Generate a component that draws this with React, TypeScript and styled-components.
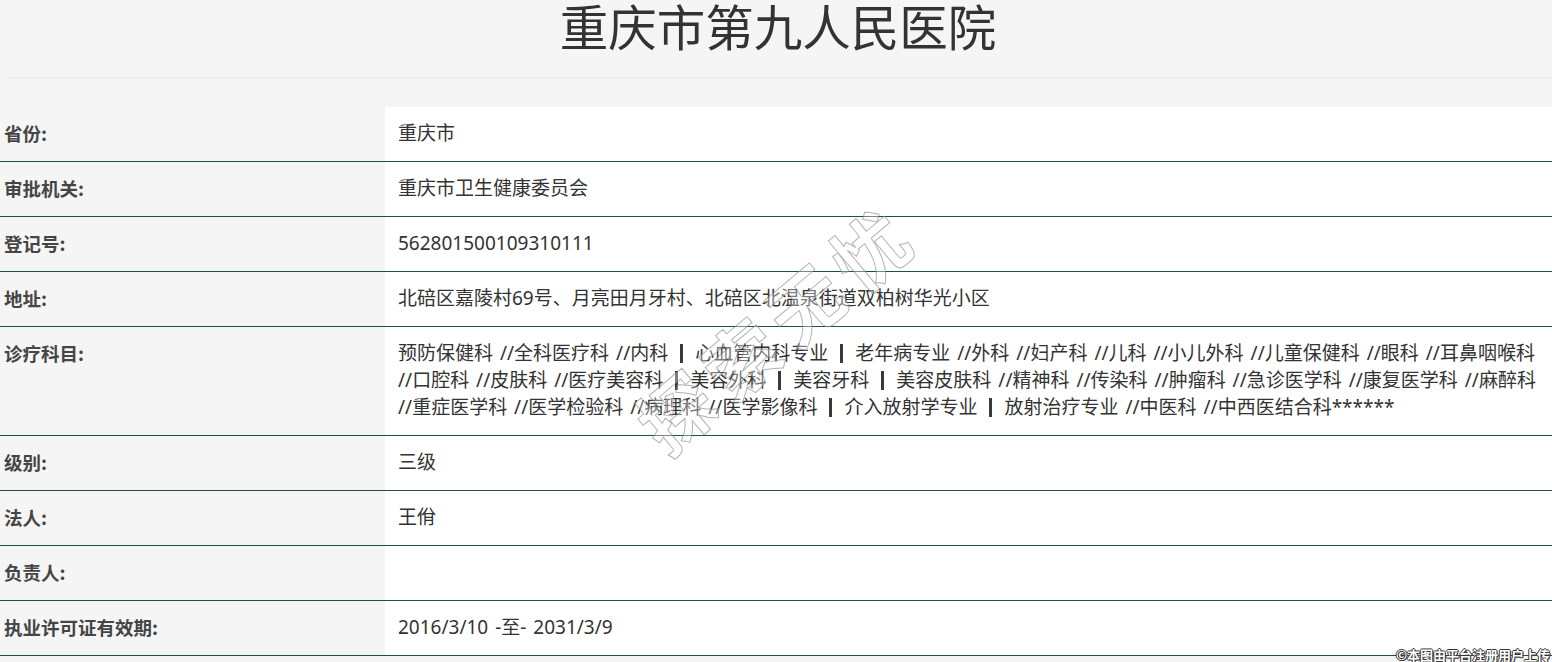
import React from "react";
import styled, { createGlobalStyle } from "styled-components";

const Global = createGlobalStyle`
  html, body {
    margin: 0;
    padding: 0;
    background: #f5f5f5;
  }
  body {
    font-family: "Noto Sans", "Noto Sans CJK SC", sans-serif;
    overflow: hidden;
  }
`;

const Page = styled.div`
  position: relative;
  width: 1552px;
  height: 662px;
  overflow: hidden;
  background: #f5f5f5;
`;

const Header = styled.header`
  margin-left: 8px;
  height: 77px;
  border-bottom: 1px solid #e9e9e9;
  box-shadow: 0 1px 0 #f0f0f0;
  display: flex;
  justify-content: center;
  align-items: flex-start;
`;

const Title = styled.h1`
  margin: 0;
  margin-left: -4px;
  font-family: "Noto Sans CJK SC", sans-serif;
  font-size: 48.5px;
  font-weight: 400;
  line-height: 50px;
  color: #333;
`;

const Table = styled.div`
  margin-top: 29px;
  display: flex;
  flex-direction: column;
`;

const Row = styled.div`
  display: grid;
  grid-template-columns: 385px 1fr;
  border-bottom: 1px solid #234f3b;
`;

const Label = styled.div`
  background: #f5f5f5;
  padding: 13px 0 14px 4px;
  font-family: "Noto Sans CJK SC", sans-serif;
  font-size: 18.5px;
  font-weight: 700;
  line-height: 27px;
  color: #454545;
`;

const Value = styled.div`
  background: #fff;
  padding: 13px 6px 14px 13px;
  font-family: "Noto Sans", "Noto Sans CJK SC", sans-serif;
  font-size: 19px;
  line-height: 27px;
  color: #333;
  min-height: 27px;
  word-spacing: 2px;
`;

const Item = styled.span`
  white-space: nowrap;
`;

const Bar = styled.span`
  display: inline-block;
  width: 3px;
  height: 19px;
  margin: 0 12px;
  vertical-align: -3px;
  background: #3a3a3a;
`;

const Watermark = styled.div`
  position: absolute;
  left: 605px;
  top: 281px;
  width: 340px;
  text-align: center;
  transform: rotate(-40deg);
  font-family: "Noto Sans CJK SC", sans-serif;
  font-size: 74px;
  font-weight: 700;
  line-height: 90px;
  letter-spacing: 10px;
  color: rgba(255, 255, 255, 0.35);
  -webkit-text-stroke: 1px rgba(130, 130, 130, 0.6);
  pointer-events: none;
  white-space: nowrap;
`;

const Credit = styled.div`
  position: absolute;
  right: 2px;
  bottom: -1px;
  font-family: "Noto Sans CJK SC", sans-serif;
  font-size: 13px;
  font-weight: 700;
  line-height: 16px;
  color: #fff;
  text-shadow: -1px 0 #333, 1px 0 #333, 0 -1px #333, 0 1px #333, 1px 1px #555;
  white-space: nowrap;
`;

const groups: string[][] = [
  ["预防保健科", "全科医疗科", "内科"],
  ["心血管内科专业"],
  ["老年病专业", "外科", "妇产科", "儿科", "小儿外科", "儿童保健科", "眼科", "耳鼻咽喉科", "口腔科", "皮肤科", "医疗美容科"],
  ["美容外科"],
  ["美容牙科"],
  ["美容皮肤科", "精神科", "传染科", "肿瘤科", "急诊医学科", "康复医学科", "麻醉科", "重症医学科", "医学检验科", "病理科", "医学影像科"],
  ["介入放射学专业"],
  ["放射治疗专业", "中医科", "中西医结合科******"],
];

const Departments = () => (
  <>
    {groups.map((g, gi) => (
      <React.Fragment key={gi}>
        {gi > 0 && <Bar />}
        {g.map((d, di) => (
          <React.Fragment key={di}>
            {di > 0 && " "}
            <Item>{di > 0 ? `//${d}` : d}</Item>
          </React.Fragment>
        ))}
      </React.Fragment>
    ))}
  </>
);

const rows: { label: string; value: React.ReactNode }[] = [
  { label: "省份:", value: "重庆市" },
  { label: "审批机关:", value: "重庆市卫生健康委员会" },
  { label: "登记号:", value: "562801500109310111" },
  { label: "地址:", value: "北碚区嘉陵村69号、月亮田月牙村、北碚区北温泉街道双柏树华光小区" },
  { label: "诊疗科目:", value: <Departments /> },
  { label: "级别:", value: "三级" },
  { label: "法人:", value: "王佾" },
  { label: "负责人:", value: "" },
  { label: "执业许可证有效期:", value: "2016/3/10 -至- 2031/3/9" },
];

export default function App() {
  return (
    <Page>
      <Global />
      <Header>
        <Title>重庆市第九人民医院</Title>
      </Header>
      <Table>
        {rows.map((r) => (
          <Row key={r.label}>
            <Label>{r.label}</Label>
            <Value>{r.value}</Value>
          </Row>
        ))}
      </Table>
      <Watermark>探索无忧</Watermark>
      <Credit>©本图由平台注册用户上传</Credit>
    </Page>
  );
}
